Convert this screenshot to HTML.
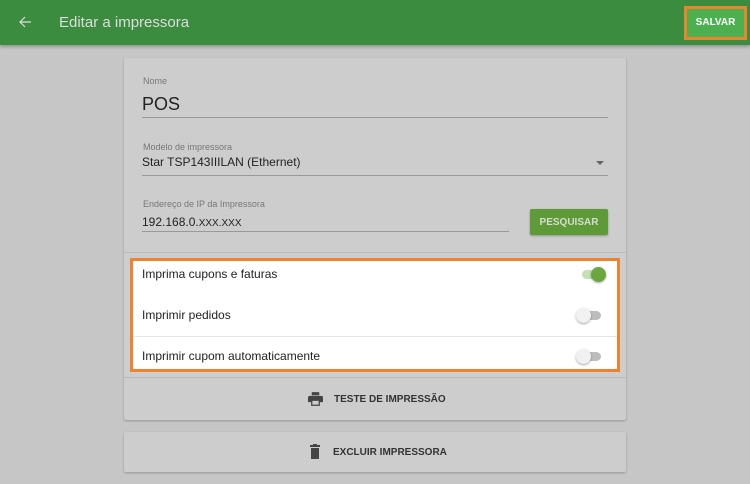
<!DOCTYPE html>
<html><head><style>
*{margin:0;padding:0;box-sizing:border-box}
body{width:750px;height:484px;background:#c6c6c6;font-family:"Liberation Sans",sans-serif;position:relative;overflow:hidden;color:#222}
.abs{position:absolute}
.hdr{left:0;top:0;width:750px;height:45px;background:#3c8c40;box-shadow:0 2px 3px rgba(0,0,0,.25)}
.card{background:#cdcdcd;box-shadow:0 1px 2px rgba(0,0,0,.25);border-radius:2px}
.lbl{font-size:9px;color:#777}
.line{height:1px;background:#999}
.row{font-size:12px;color:#222}
.tog{width:20px;height:9px;border-radius:5px;background:#bdbdbd}
.knob{width:15px;height:15px;border-radius:50%;background:#f1f1f1;box-shadow:0 1px 2px rgba(0,0,0,.35)}
.btxt{font-size:10px;font-weight:bold;color:#333}
</style></head><body>
<div class="abs hdr"></div>
<svg class="abs" style="left:18px;top:15px" width="14" height="14" viewBox="0 0 14 14"><path d="M13 7H2M7 2L2 7l5 5" stroke="#ddd" stroke-width="1.2" fill="none"/></svg>
<div class="abs" style="left:59px;top:14px;font-size:15px;color:#ddd">Editar a impressora</div>
<div class="abs" style="left:684px;top:6px;width:63px;height:34px;border:3px solid #f0822e;background:#4caf50"></div>
<div class="abs" style="left:684px;top:17px;width:63px;text-align:center;font-size:10px;font-weight:bold;color:#fff;line-height:12px">SALVAR</div>

<div class="abs card" style="left:124px;top:58px;width:502px;height:362px"></div>
<div class="abs lbl" style="left:143px;top:76px">Nome</div>
<div class="abs" style="left:142px;top:94px;font-size:18px">POS</div>
<div class="abs line" style="left:142px;top:117px;width:466px"></div>
<div class="abs lbl" style="left:143px;top:142px">Modelo de impressora</div>
<div class="abs" style="left:142px;top:155px;font-size:12px">Star TSP143IIILAN (Ethernet)</div>
<div class="abs" style="left:596px;top:161px;width:0;height:0;border-left:4px solid transparent;border-right:4px solid transparent;border-top:4px solid #666"></div>
<div class="abs line" style="left:142px;top:175px;width:466px"></div>
<div class="abs lbl" style="left:143px;top:199px">Endereço de IP da Impressora</div>
<div class="abs" style="left:142px;top:215px;font-size:12px">192.168.0.<span style="font-size:10px">XXX.XXX</span></div>
<div class="abs line" style="left:142px;top:231px;width:367px"></div>
<div class="abs" style="left:530px;top:209px;width:78px;height:26px;background:#5e9a38;border-radius:2px;box-shadow:0 1px 2px rgba(0,0,0,.3);font-size:10px;font-weight:bold;text-align:center;line-height:27px;color:#d6dccf">PESQUISAR</div>
<div class="abs" style="left:124px;top:252px;width:502px;height:1px;background:#bbb"></div>

<div class="abs" style="left:130px;top:258px;width:490px;height:114px;background:#fff;border:3px solid #f0822e"></div>
<div class="abs row" style="left:142px;top:267px">Imprima cupons e faturas</div>
<div class="abs tog" style="left:582px;top:270px;background:#c5e0b5"></div>
<div class="abs knob" style="left:591px;top:267px;background:#6aa83e"></div>
<div class="abs row" style="left:142px;top:308px">Imprimir pedidos</div>
<div class="abs tog" style="left:581px;top:311px"></div>
<div class="abs knob" style="left:576px;top:308px"></div>
<div class="abs" style="left:133px;top:336px;width:484px;height:1px;background:#e6e6e6"></div>
<div class="abs row" style="left:142px;top:349px">Imprimir cupom automaticamente</div>
<div class="abs tog" style="left:581px;top:352px"></div>
<div class="abs knob" style="left:576px;top:349px"></div>
<div class="abs" style="left:124px;top:377px;width:502px;height:1px;background:#bbb"></div>

<svg class="abs" style="left:308px;top:392px" width="15" height="14" viewBox="0 0 24 22"><path d="M6 0h12v5H6zM3 6h18a3 3 0 0 1 3 3v7h-5v6H5v-6H0V9a3 3 0 0 1 3-3zM7 14v6h10v-6z" fill="#444" fill-rule="evenodd"/></svg>
<div class="abs btxt" style="left:334px;top:394px">TESTE DE IMPRESSÃO</div>

<div class="abs card" style="left:124px;top:432px;width:502px;height:40px"></div>
<svg class="abs" style="left:310px;top:444px" width="10" height="15" viewBox="0 0 10 15"><rect x="0" y="1" width="10" height="2" fill="#444"/><rect x="3" y="0" width="4" height="2" fill="#444"/><rect x="1" y="4" width="8" height="11" fill="#444"/></svg>
<div class="abs btxt" style="left:333px;top:447px">EXCLUIR IMPRESSORA</div>
</body></html>
